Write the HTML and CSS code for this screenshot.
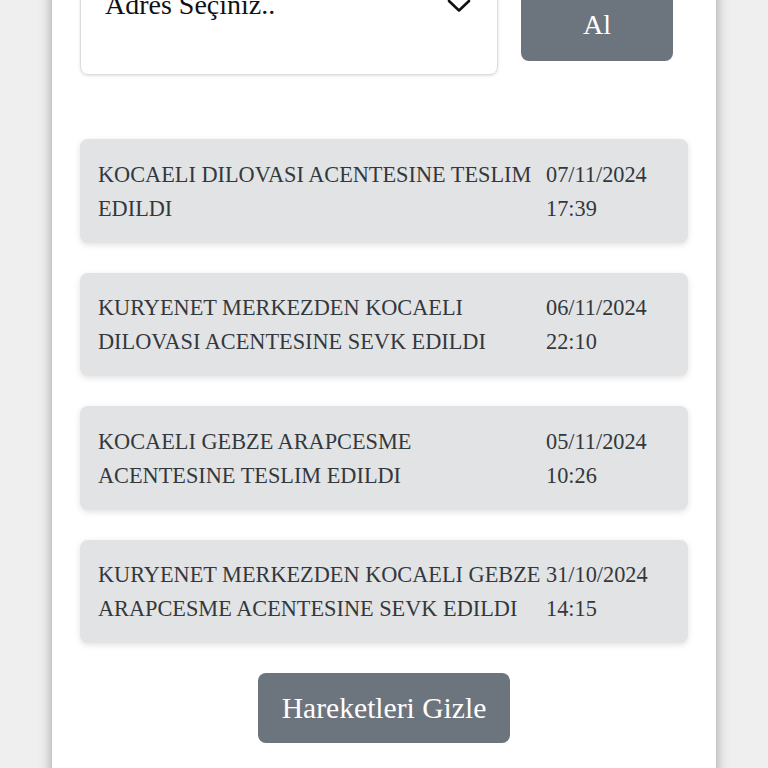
FILE: index.html
```html
<!DOCTYPE html>
<html lang="tr">
<head>
    <meta charset="UTF-8">
    <meta name="viewport" content="width=device-width, initial-scale=1.0">
    <title>Kargo Hareketleri</title>
    <link rel="stylesheet" href="styles.css">
</head>
<body>
    <div class="kart">
        <div class="adres-satir">
            <div class="adres-secim">
                <span class="adres-metin">Adres Seçiniz..</span>
                <svg class="ok" width="24" height="14" viewBox="0 0 24 14">
                    <path d="M2 2 L12 11.5 L22 2" fill="none" stroke="#111" stroke-width="2.6" stroke-linecap="round" stroke-linejoin="round"/>
                </svg>
            </div>
            <button class="btn-gri btn-al">Al</button>
        </div>

        <div class="hareketler">
            <div class="hareket">
                <div class="aciklama">KOCAELI DILOVASI ACENTESINE TESLIM EDILDI</div>
                <div class="tarih">07/11/2024<br>17:39</div>
            </div>
            <div class="hareket">
                <div class="aciklama">KURYENET MERKEZDEN KOCAELI DILOVASI ACENTESINE SEVK EDILDI</div>
                <div class="tarih">06/11/2024<br>22:10</div>
            </div>
            <div class="hareket">
                <div class="aciklama">KOCAELI GEBZE ARAPCESME ACENTESINE TESLIM EDILDI</div>
                <div class="tarih">05/11/2024<br>10:26</div>
            </div>
            <div class="hareket">
                <div class="aciklama">KURYENET MERKEZDEN KOCAELI GEBZE ARAPCESME ACENTESINE SEVK EDILDI</div>
                <div class="tarih">31/10/2024<br>14:15</div>
            </div>
        </div>

        <div class="alt">
            <button class="btn-gri btn-gizle">Hareketleri Gizle</button>
        </div>
    </div>
</body>
</html>
```

FILE: styles.css
```css
body {
    margin: 0;
    background-color: #efefef;
    font-family: "Liberation Serif", "Times New Roman", serif;
    color: #111;
}

.kart {
    width: 664px;
    margin: -53px auto 0 auto;
    padding: 28px 28px 40px 28px;
    box-sizing: border-box;
    background-color: #fff;
    box-shadow: 0 0 12px rgba(0, 0, 0, 0.35);
}

.adres-satir {
    display: flex;
    align-items: center;
    gap: 23px;
    padding-right: 15px;
}

.adres-secim {
    flex: 1;
    height: 100px;
    box-sizing: border-box;
    padding: 13px 26px 0 24px;
    border: 1px solid #dcdcdc;
    border-radius: 8px;
    box-shadow: 0 1px 3px rgba(0, 0, 0, 0.12);
    display: flex;
    align-items: flex-start;
    justify-content: space-between;
}

.adres-metin {
    font-size: 28px;
    line-height: 32px;
}

.ok {
    margin-top: 10px;
}

.btn-gri {
    background-color: #6c757d;
    color: #fff;
    border: none;
    border-radius: 8px;
    font-family: "Liberation Serif", "Times New Roman", serif;
    cursor: pointer;
}

.btn-al {
    width: 152px;
    height: 72px;
    font-size: 28px;
}

.hareketler {
    margin-top: 64px;
    display: flex;
    flex-direction: column;
    gap: 30px;
}

.hareket {
    display: flex;
    padding: 18.5px 18px 17px 18px;
    background-color: #e2e3e5;
    border-radius: 8px;
    box-shadow: 0 2px 6px rgba(0, 0, 0, 0.12);
    color: #33383c;
    font-size: 22.3px;
    line-height: 34px;
}

.aciklama {
    flex: 1;
}

.tarih {
    width: 124px;
}

.alt {
    margin-top: 30px;
    text-align: center;
}

.btn-gizle {
    height: 70px;
    padding: 0 24px;
    font-size: 29.6px;
}
```
